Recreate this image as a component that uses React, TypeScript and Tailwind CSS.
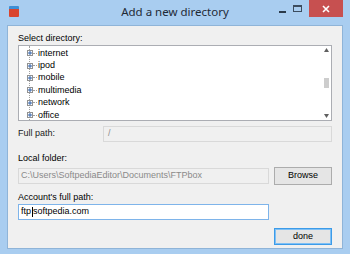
export default function App() {
  const items = ["internet", "ipod", "mobile", "multimedia", "network", "office"];
  const ui = { fontFamily: '"Liberation Sans", Arial, sans-serif' };

  return (
    <div className="flex h-[254px] w-[350px] flex-col bg-[#a9cdf0]" style={ui}>
      {/* Title bar */}
      <div className="relative flex h-[25px] items-start">
        <div className="ml-[9px] mt-[6px] flex h-[11px] w-[10px] flex-col overflow-hidden rounded-[1px]">
          <div className="h-[3px] bg-[#3d8fd6]" />
          <div className="flex-1 bg-[#d9442e]" />
        </div>
        <div
          className="absolute left-0 right-0 top-[4px] text-center text-[11.5px] leading-[16px] text-[#1f2a36]"
          style={{ fontFamily: '"Noto Sans", "Open Sans", sans-serif' }}
        >
          Add a new directory
        </div>
        <div className="absolute right-[64px] top-[11px] h-[2px] w-[7px] bg-[#2b3a4a]" />
        <div className="absolute right-[48px] top-[5px] h-[7px] w-[9px] border border-[#3c4c5e] border-t-2" />
        <div className="absolute right-[7px] top-0 flex h-[17px] w-[34px] items-center justify-center bg-[#c75050]">
          <svg width="8" height="8" viewBox="0 0 8 8">
            <path d="M1 1 L7 7 M7 1 L1 7" stroke="#fff" strokeWidth="1.6" />
          </svg>
        </div>
      </div>

      {/* Client */}
      <div className="mx-[7px] mb-[5px] flex flex-1 flex-col border border-[#8fb4d8] bg-[#f0f0f0] px-[10px] text-[9px] text-black">
        <div className="mt-[6px] leading-[12px]">Select directory:</div>
        <div className="mt-[1px] flex h-[76px] border border-[#abadb3] bg-white">
          <div className="relative flex-1 pl-[8px] pt-[1px]">
            <div className="absolute left-[10px] top-[0px] h-[74px] border-l border-dotted border-[#a0a0a0]" />
            {items.map((it) => (
              <div key={it} className="relative flex h-[12.4px] items-center">
                <div className="z-10 flex h-[6px] w-[6px] items-center justify-center border border-[#919191] bg-white">
                  <svg width="4" height="4" viewBox="0 0 4 4">
                    <path d="M0 2 H4 M2 0 V4" stroke="#2d5ea8" strokeWidth="1" />
                  </svg>
                </div>
                <div className="w-[4px] border-t border-dotted border-[#a0a0a0]" />
                <span className="ml-[1px] leading-none">{it}</span>
              </div>
            ))}
          </div>
          <div className="flex w-[9px] flex-col items-center bg-white py-[2px]">
            <svg width="5" height="4" viewBox="0 0 5 4">
              <path d="M0 4 L2.5 0 L5 4 Z" fill="#606060" />
            </svg>
            <div className="mt-[26px] h-[10px] w-[5px] bg-[#cdcdcd]" />
            <div className="flex-1" />
            <svg width="5" height="4" viewBox="0 0 5 4">
              <path d="M0 0 L2.5 4 L5 0 Z" fill="#606060" />
            </svg>
          </div>
        </div>

        <div className="mt-[5px] flex items-center">
          <div className="w-[85px] text-[#222]">Full path:</div>
          <div className="flex h-[16px] flex-1 items-center border border-[#d9d9d9] bg-[#f0f0f0] px-[4px] text-[#8a8a8a]">/</div>
        </div>

        <div className="mt-[10px] leading-[12px]">Local folder:</div>
        <div className="mt-[3px] flex items-center gap-[5px]">
          <div className="flex h-[16px] flex-1 items-center border border-[#d9d9d9] bg-[#f0f0f0] px-[2px] text-[#8a8a8a]">
            C:\Users\SoftpediaEditor\Documents\FTPbox
          </div>
          <div className="flex h-[18px] w-[58px] items-center justify-center border border-[#acacac] bg-[#e5e5e5]">Browse</div>
        </div>

        <div className="mt-[6px] leading-[12px]">Account's full path:</div>
        <div className="mt-[1px] flex pr-[63px]">
          <div className="flex h-[16px] flex-1 items-center border border-[#7eb4ea] bg-white px-[2px]">
            ftp<span className="mx-[0.5px] h-[10px] w-px bg-black" />softpedia.com
          </div>
        </div>

        <div className="mt-[8px] flex justify-end">
          <div className="flex h-[17px] w-[58px] items-center justify-center border border-[#3c9be8] bg-[#e5e5e5] shadow-[inset_0_0_0_1px_#7fc0f5]">done</div>
        </div>
      </div>
    </div>
  );
}
